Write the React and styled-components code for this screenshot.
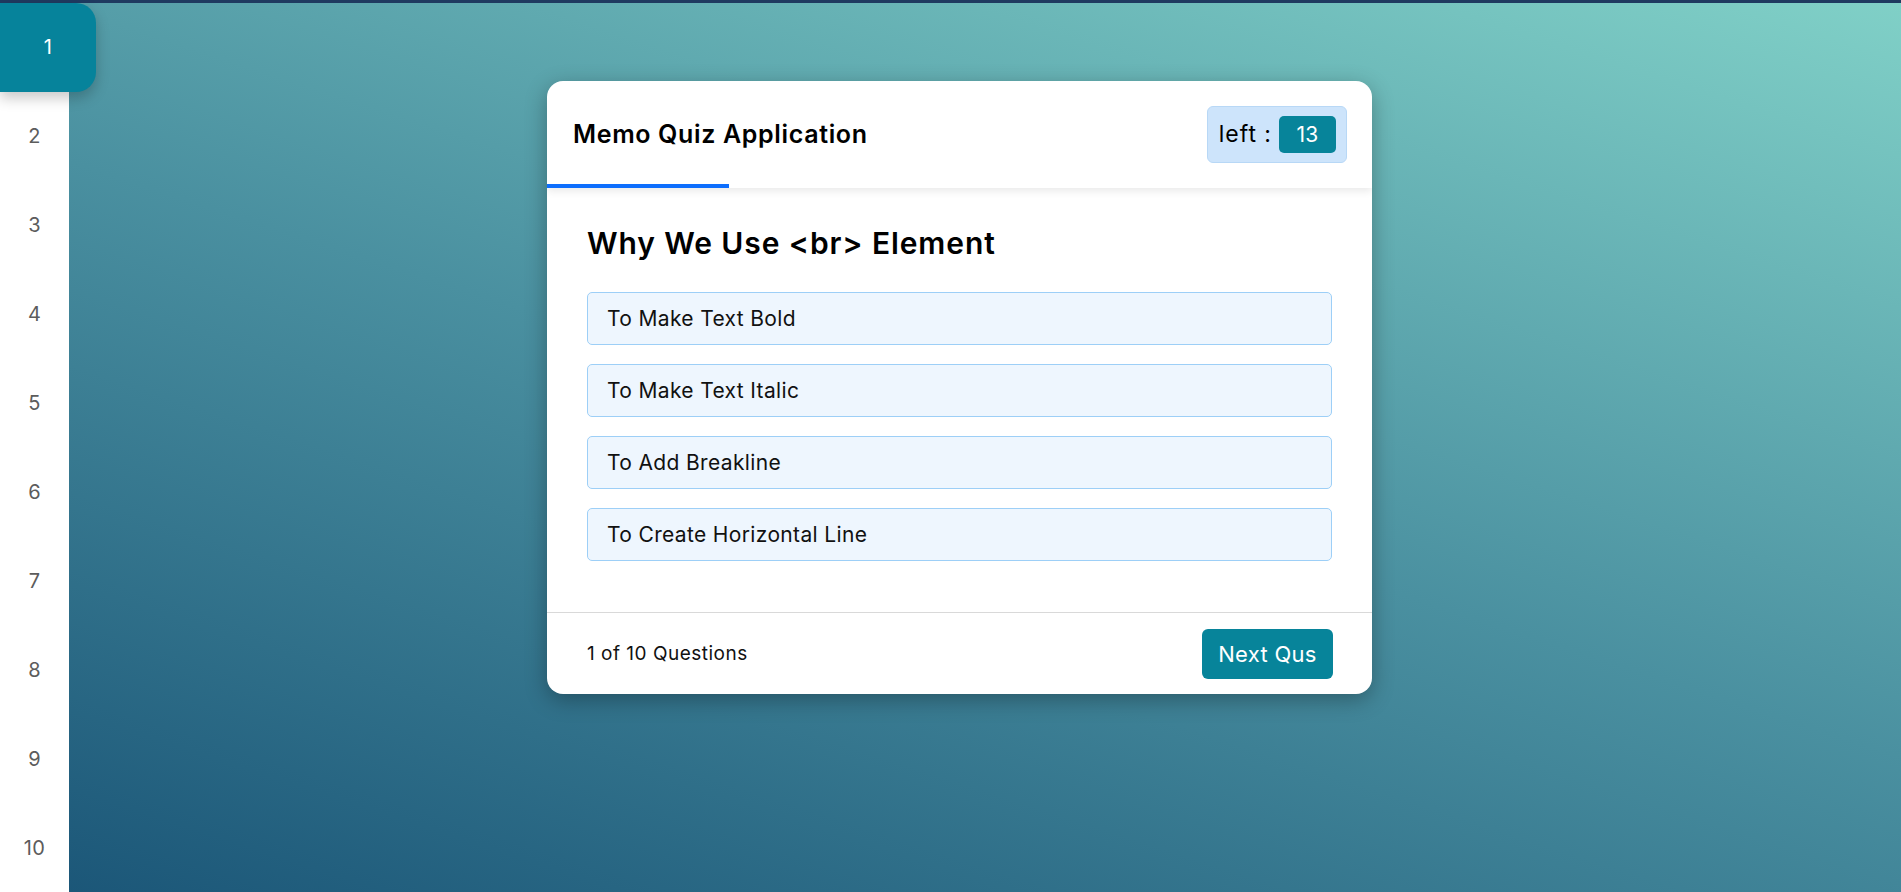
import React from "react";
import styled, { createGlobalStyle } from "styled-components";

const GlobalStyle = createGlobalStyle`
  html, body {
    margin: 0;
    padding: 0;
    height: 100%;
  }
  body {
    font-family: "Inter", "Noto Sans", sans-serif;
    overflow: hidden;
  }
  * { box-sizing: border-box; }
`;

const Page = styled.div`
  height: 100vh;
  display: flex;
  border-top: 3px solid #1f3a60;
  background: linear-gradient(18deg, #1a5577 0%, #4a90a0 50%, #80d0c7 100%);
`;

const Sidebar = styled.nav`
  width: 69px;
  flex-shrink: 0;
  background: #ffffff;
  display: flex;
  flex-direction: column;
`;

const NavItem = styled.div`
  flex: 1;
  display: flex;
  align-items: center;
  justify-content: center;
  font-size: 20px;
  letter-spacing: 0.3px;
  color: ${(p) => (p.$active ? "#ffffff" : "#5c5c5c")};
  background: ${(p) => (p.$active ? "#06839b" : "transparent")};
  width: ${(p) => (p.$active ? "96px" : "69px")};
  border-radius: ${(p) => (p.$active ? "0 20px 20px 0" : "0")};
  box-shadow: ${(p) => (p.$active ? "0 6px 14px rgba(0,0,0,0.22)" : "none")};
  position: relative;
  z-index: ${(p) => (p.$active ? 2 : 0)};
`;

const Main = styled.main`
  flex: 1;
  padding: 78px 0 0 478px;
`;

const Card = styled.section`
  width: 825px;
  height: 613px;
  background: #ffffff;
  border-radius: 16px;
  box-shadow: 0 6px 22px rgba(0, 0, 0, 0.3);
  overflow: hidden;
  display: flex;
  flex-direction: column;
`;

const Header = styled.header`
  height: 107px;
  display: flex;
  flex-direction: column;
  box-shadow: 0 3px 8px rgba(0, 0, 0, 0.09);
  position: relative;
  z-index: 1;
`;

const HeaderRow = styled.div`
  flex: 1;
  display: flex;
  align-items: center;
  justify-content: space-between;
  padding: 3px 25px 0 26px;
`;

const Title = styled.h1`
  margin: 0;
  font-size: 25px;
  font-weight: 600;
  letter-spacing: 0.65px;
  color: #000;
`;

const Badge = styled.div`
  display: flex;
  align-items: center;
  gap: 7px;
  padding: 9px 10px 9px 11px;
  background: #cde4fb;
  border: 1px solid #b8d8f6;
  border-radius: 6px;
  font-size: 23px;
  letter-spacing: 1px;
  color: #000;
`;

const Count = styled.span`
  width: 57px;
  height: 37px;
  display: flex;
  align-items: center;
  justify-content: center;
  background: #07849a;
  color: #fff;
  border-radius: 5px;
  font-size: 21px;
  letter-spacing: 0.3px;
`;

const ProgressTrack = styled.div`
  height: 4px;
  background: transparent;
`;

const ProgressFill = styled.div`
  height: 100%;
  background: #0d6efd;
`;

const Body = styled.div`
  flex: 1;
  padding: 37px 40px 0 40px;
`;

const Question = styled.h2`
  margin: 0;
  font-size: 30px;
  line-height: 36px;
  font-weight: 600;
  letter-spacing: 0.9px;
  color: #000;
`;

const Options = styled.ul`
  list-style: none;
  margin: 31px 0 0 0;
  padding: 0;
  display: flex;
  flex-direction: column;
  gap: 19px;
`;

const Option = styled.li`
  height: 53px;
  display: flex;
  align-items: center;
  padding: 0 19px;
  background: #eef6fe;
  border: 1px solid #9dcff7;
  border-radius: 5px;
  font-size: 21px;
  letter-spacing: 0.35px;
  color: #111;
`;

const Footer = styled.footer`
  height: 82px;
  border-top: 1.5px solid #d9d9d9;
  display: flex;
  align-items: center;
  justify-content: space-between;
  padding: 0 39px 0 40px;
`;

const Counter = styled.span`
  font-size: 19px;
  letter-spacing: 0.5px;
  color: #111;
`;

const NextButton = styled.button`
  width: 131px;
  height: 50px;
  border: none;
  border-radius: 6px;
  background: #07849a;
  color: #fff;
  font-family: inherit;
  font-size: 22px;
  letter-spacing: 0.3px;
  cursor: pointer;
`;

const options = [
  "To Make Text Bold",
  "To Make Text Italic",
  "To Add Breakline",
  "To Create Horizontal Line",
];

export default function App() {
  const progress = 22;
  return (
    <>
      <GlobalStyle />
      <Page>
        <Sidebar>
          {Array.from({ length: 10 }, (_, i) => (
            <NavItem key={i} $active={i === 0}>
              {i + 1}
            </NavItem>
          ))}
        </Sidebar>
        <Main>
          <Card>
            <Header>
              <HeaderRow>
                <Title>Memo Quiz Application</Title>
                <Badge>
                  <span>left :</span>
                  <Count>13</Count>
                </Badge>
              </HeaderRow>
              <ProgressTrack>
                <ProgressFill style={{ width: `${progress}%` }} />
              </ProgressTrack>
            </Header>
            <Body>
              <Question>Why We Use &lt;br&gt; Element</Question>
              <Options>
                {options.map((o) => (
                  <Option key={o}>{o}</Option>
                ))}
              </Options>
            </Body>
            <Footer>
              <Counter>1 of 10 Questions</Counter>
              <NextButton>Next Qus</NextButton>
            </Footer>
          </Card>
        </Main>
      </Page>
    </>
  );
}
